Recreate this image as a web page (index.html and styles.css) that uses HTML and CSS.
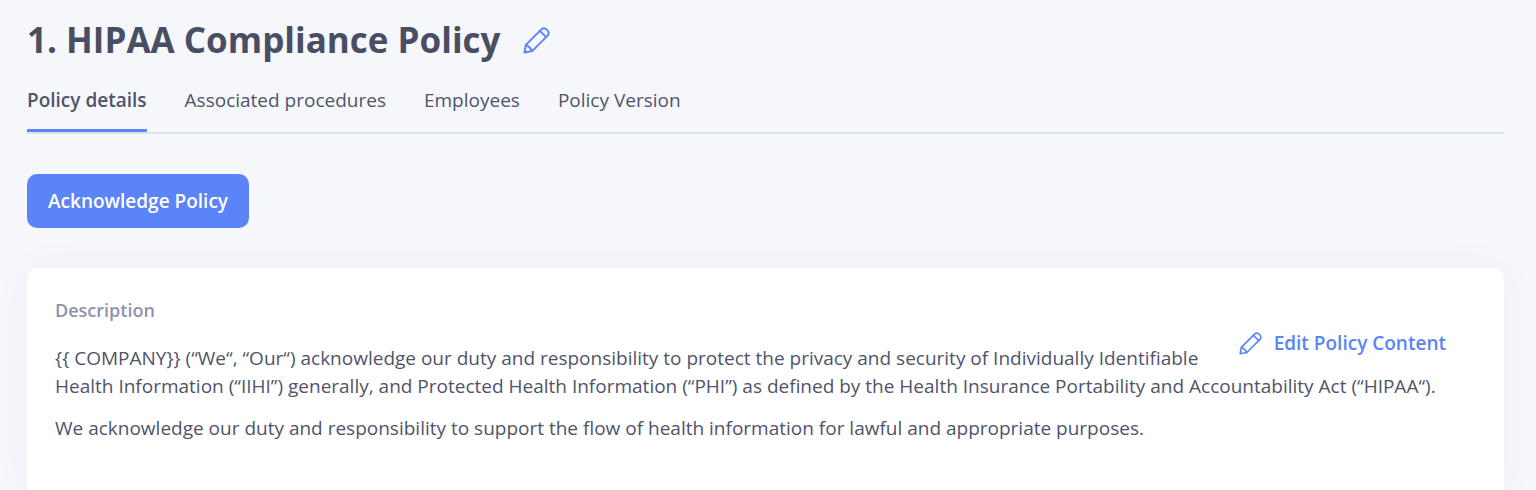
FILE: index.html
```html
<!DOCTYPE html>
<html lang="en">
<head>
    <meta charset="UTF-8">
    <meta name="viewport" content="width=device-width, initial-scale=1.0">
    <title>HIPAA Compliance Policy</title>
    <link rel="stylesheet" href="styles.css">
</head>
<body>
    <header class="page-header">
        <h1>1. HIPAA Compliance Policy</h1>
        <button type="button" class="icon-button" aria-label="Edit title">
            <svg class="pencil pencil-large" viewBox="0 0 28 28" fill="none" stroke="currentColor" stroke-width="2" stroke-linejoin="round" stroke-linecap="round">
                <path d="M1.5 26.5 L3 18.5 L19 2.5 Q22 0 25 3 Q28 6 25.5 9 L9.5 25 Z"/>
                <path d="M17.5 4 L24 10.5 M3 18.5 Q7.5 20.5 9.5 25"/>
            </svg>
        </button>
    </header>

    <nav class="tabs">
        <a href="#details" class="tab active">Policy details</a>
        <a href="#procedures" class="tab">Associated procedures</a>
        <a href="#employees" class="tab">Employees</a>
        <a href="#version" class="tab">Policy Version</a>
    </nav>

    <button type="button" class="acknowledge">Acknowledge Policy</button>

    <section class="card" id="details">
        <h2>Description</h2>
        <a href="#edit" class="edit-link">
            <svg class="pencil" viewBox="0 0 28 28" fill="none" stroke="currentColor" stroke-width="2" stroke-linejoin="round" stroke-linecap="round">
                <path d="M1.5 26.5 L3 18.5 L19 2.5 Q22 0 25 3 Q28 6 25.5 9 L9.5 25 Z"/>
                <path d="M17.5 4 L24 10.5 M3 18.5 Q7.5 20.5 9.5 25"/>
            </svg>
            Edit Policy Content
        </a>
        <div class="policy-text">
            <p>{{ COMPANY}} (“We“, “Our“) acknowledge our duty and responsibility to protect the privacy and security of Individually Identifiable Health Information (“IIHI”) generally, and Protected Health Information (“PHI”) as defined by the Health Insurance Portability and Accountability Act (“HIPAA“).</p>
            <p>We acknowledge our duty and responsibility to support the flow of health information for lawful and appropriate purposes.</p>
        </div>
    </section>
</body>
</html>
```

FILE: styles.css
```css
* {
    box-sizing: border-box;
}
body {
    font-family: "Open Sans", sans-serif;
    font-size: 19px;
    margin: 0;
    padding: 16px 32px 0 27px;
    min-height: 100vh;
    display: flex;
    flex-direction: column;
    background: #f6f7fb;
    color: #50546a;
}
.page-header {
    display: flex;
    align-items: center;
    gap: 22px;
}
h1 {
    margin: 0;
    font-size: 35px;
    line-height: 48px;
    font-weight: 700;
    color: #4a4e62;
}
button {
    font-family: inherit;
    cursor: pointer;
    border: none;
}
.icon-button {
    background: none;
    padding: 0;
    display: flex;
    color: #5a84f8;
}
.pencil {
    width: 23px;
    height: 23px;
}
.pencil-large {
    width: 27px;
    height: 27px;
}
.tabs {
    display: flex;
    gap: 38px;
    margin-top: 18px;
    border-bottom: 2px solid #dde3ec;
}
.tab {
    color: inherit;
    text-decoration: none;
    line-height: 36px;
    padding-bottom: 11px;
    border-bottom: 3px solid transparent;
}
.tab.active {
    font-weight: 600;
    border-color: #5a84f8;
}
.acknowledge {
    align-self: flex-start;
    margin: 40px 0;
    padding: 0 21px;
    height: 54px;
    border-radius: 10px;
    background: #5a84f8;
    color: white;
    font-size: 19px;
    font-weight: 600;
}
.card {
    flex: 1;
    background: white;
    border-radius: 10px 10px 0 0;
    padding: 28px;
    box-shadow: 0 0 40px rgba(74, 77, 99, 0.04);
}
h2 {
    margin: 0 0 5px;
    font-size: 18px;
    line-height: 28px;
    font-weight: 600;
    color: #8d94aa;
}
.edit-link {
    float: right;
    display: flex;
    align-items: center;
    gap: 12px;
    margin: 0 30px 0 20px;
    line-height: 28px;
    color: #5a84f8;
    font-weight: 600;
    text-decoration: none;
}
.policy-text {
    padding-top: 15px;
}
p {
    margin: 0 0 14px;
    line-height: 28px;
}
```
